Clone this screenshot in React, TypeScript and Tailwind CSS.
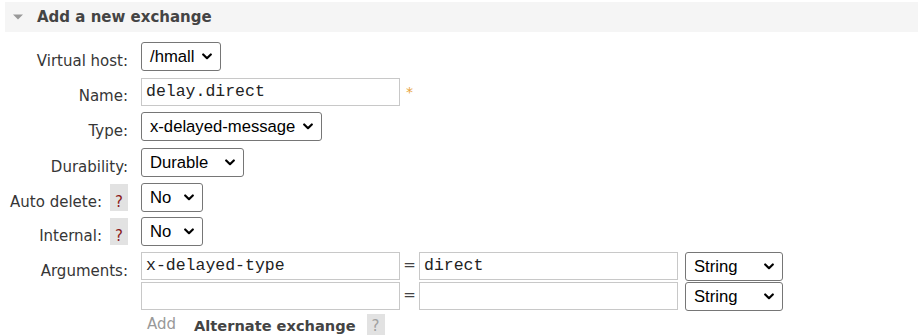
import React from "react";

function Chevron() {
  return (
    <svg width="10" height="7" viewBox="0 0 10 7" className="shrink-0">
      <path d="M1.2 1.5 L5 5.2 L8.8 1.5" fill="none" stroke="#000" strokeWidth="2.2" strokeLinecap="round" strokeLinejoin="round" />
    </svg>
  );
}

function Sel({ text, cls }: { text: string; cls: string }) {
  return (
    <div
      className={
        "flex items-center justify-between border border-[#767676] rounded-[3px] bg-white pl-[8px] pr-[8px] h-[29px] font-['Liberation_Sans',sans-serif] text-[16.67px] leading-[20px] text-black " +
        cls
      }
    >
      <span className="whitespace-nowrap">{text}</span>
      <Chevron />
    </div>
  );
}

function Inp({ text }: { text?: string }) {
  return (
    <div className="flex items-center w-[259px] h-[28px] border border-[#c8c8c8] bg-white pl-[4px] font-['Liberation_Mono',monospace] text-[16.5px] leading-[20px] text-[#222] whitespace-nowrap">
      {text ?? ""}
    </div>
  );
}

function Help({ gray }: { gray?: boolean }) {
  return (
    <span
      className={
        "inline-block w-[18px] bg-[#e2e2e2] text-center leading-[18px] text-[15px] " +
        (gray ? "h-[21px] pt-[3px] text-[#a0a0a0]" : "h-[27px] pt-[9px] text-[#8b1a1a]")
      }
    >
      ?
    </span>
  );
}

export default function App() {
  return (
    <div className="w-[918px] h-[335px] overflow-hidden bg-white font-['DejaVu_Sans',sans-serif] text-[15px] text-[#363636]">
      {/* Header */}
      <div className="mt-[2px] ml-[5px] h-[30px] bg-[#f5f5f5] flex items-center pl-[8px]">
        <svg width="10" height="6" viewBox="0 0 10 6" className="shrink-0">
          <path d="M0 0.5 L10 0.5 L5 5.5 Z" fill="#999" />
        </svg>
        <span className="ml-[14px] font-bold text-[15px] leading-[18px] text-[#444]">Add a new exchange</span>
      </div>

      <div className="mt-[10px] flex flex-col">
        {/* Virtual host */}
        <div className="flex items-start h-[36px]">
          <div className="w-[128px] shrink-0 flex justify-end">
            <span className="pt-[10px] leading-[18px] whitespace-nowrap">Virtual host:</span>
          </div>
          <div className="ml-[13px]">
            <Sel text="/hmall" cls="w-[80px]" />
          </div>
        </div>

        {/* Name */}
        <div className="flex items-start h-[34px]">
          <div className="w-[128px] shrink-0 flex justify-end">
            <span className="pt-[9px] leading-[18px] whitespace-nowrap">Name:</span>
          </div>
          <div className="ml-[13px] flex items-start">
            <Inp text="delay.direct" />
            <span className="ml-[6px] pt-[5px] leading-[18px] text-[14px] text-[#e8a33d]">*</span>
          </div>
        </div>

        {/* Type */}
        <div className="flex items-start h-[36px]">
          <div className="w-[128px] shrink-0 flex justify-end">
            <span className="pt-[10px] leading-[18px] whitespace-nowrap">Type:</span>
          </div>
          <div className="ml-[13px]">
            <Sel text="x-delayed-message" cls="w-[181px]" />
          </div>
        </div>

        {/* Durability */}
        <div className="flex items-start h-[35px]">
          <div className="w-[128px] shrink-0 flex justify-end">
            <span className="pt-[10px] leading-[18px] whitespace-nowrap">Durability:</span>
          </div>
          <div className="ml-[13px]">
            <Sel text="Durable" cls="w-[103px]" />
          </div>
        </div>

        {/* Auto delete */}
        <div className="flex items-start h-[34px]">
          <div className="w-[128px] shrink-0 flex justify-end items-start gap-[8px]">
            <span className="pt-[10px] leading-[18px] whitespace-nowrap">Auto delete:</span>
            <span className="mt-[1px]">
              <Help />
            </span>
          </div>
          <div className="ml-[13px]">
            <Sel text="No" cls="w-[62px]" />
          </div>
        </div>

        {/* Internal */}
        <div className="flex items-start h-[35px]">
          <div className="w-[128px] shrink-0 flex justify-end items-start gap-[8px]">
            <span className="pt-[10px] leading-[18px] whitespace-nowrap">Internal:</span>
            <span className="mt-[1px]">
              <Help />
            </span>
          </div>
          <div className="ml-[13px]">
            <Sel text="No" cls="w-[62px]" />
          </div>
        </div>

        {/* Arguments */}
        <div className="flex items-start">
          <div className="w-[128px] shrink-0 flex justify-end">
            <span className="pt-[10px] leading-[18px] whitespace-nowrap">Arguments:</span>
          </div>
          <div className="ml-[13px] flex flex-col">
            <div className="flex items-start h-[30px]">
              <Inp text="x-delayed-type" />
              <span className="w-[19px] text-center pt-[4px] leading-[18px] text-[#444]">=</span>
              <Inp text="direct" />
              <div className="ml-[7px]">
                <Sel text="String" cls="w-[98px]" />
              </div>
            </div>
            <div className="flex items-start h-[30px]">
              <Inp />
              <span className="w-[19px] text-center pt-[4px] leading-[18px] text-[#444]">=</span>
              <Inp />
              <div className="ml-[7px]">
                <Sel text="String" cls="w-[98px]" />
              </div>
            </div>
            <div className="flex items-start h-[23px]">
              <span className="ml-[6px] pt-[3px] leading-[18px] text-[#999]">Add</span>
              <span className="ml-[18px] pt-[5px] leading-[18px] font-bold text-[14.6px] text-[#444] whitespace-nowrap">
                Alternate exchange
              </span>
              <span className="ml-[11px] mt-[2px]">
                <Help gray />
              </span>
            </div>
          </div>
        </div>
      </div>
    </div>
  );
}
